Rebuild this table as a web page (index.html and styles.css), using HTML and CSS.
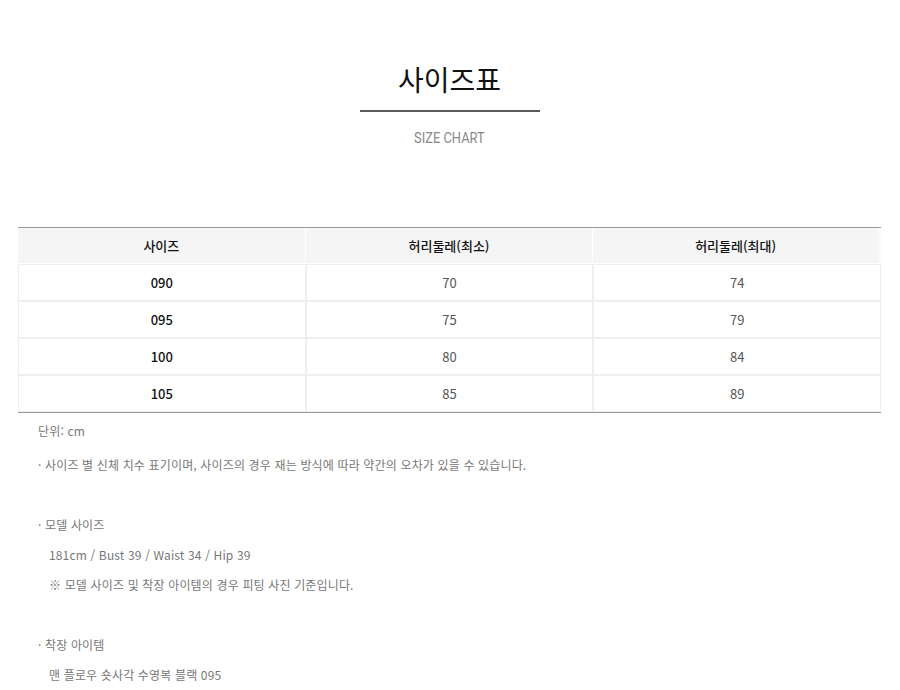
FILE: index.html
```html
<!DOCTYPE html>
<html lang="ko">
<head>
<meta charset="utf-8">
<title>사이즈표</title>
<link rel="stylesheet" href="styles.css">
</head>
<body>
<div class="page">
  <header class="head">
    <h1 class="title">사이즈표</h1>
    <div class="rule"></div>
    <p class="subtitle">SIZE CHART</p>
  </header>
  <table class="chart">
    <thead>
      <tr><th>사이즈</th><th>허리둘레(최소)</th><th>허리둘레(최대)</th></tr>
    </thead>
    <tbody>
      <tr><td class="size">090</td><td>70</td><td>74</td></tr>
      <tr><td class="size">095</td><td>75</td><td>79</td></tr>
      <tr><td class="size">100</td><td>80</td><td>84</td></tr>
      <tr><td class="size">105</td><td>85</td><td>89</td></tr>
    </tbody>
  </table>
  <div class="notes">
    <p class="unit">단위: cm</p>
    <p>· 사이즈 별 신체 치수 표기이며, 사이즈의 경우 재는 방식에 따라 약간의 오차가 있을 수 있습니다.</p>
    <p class="blank">&nbsp;</p>
    <p>· 모델 사이즈</p>
    <p class="sub">181cm / Bust 39 / Waist 34 / Hip 39</p>
    <p class="sub">※ 모델 사이즈 및 착장 아이템의 경우 피팅 사진 기준입니다.</p>
    <p class="blank">&nbsp;</p>
    <p>· 착장 아이템</p>
    <p class="sub">맨 플로우 숏사각 수영복 블랙 095</p>
  </div>
</div>
</body>
</html>
```
FILE: styles.css
```css
html, body {
  margin: 0;
  padding: 0;
  background: #fff;
}
body {
  font-family: "Noto Sans CJK KR", "Noto Sans", sans-serif;
  color: #333;
}
.page {
  padding: 0 19px 0 18px;
}
.head {
  display: flex;
  flex-direction: column;
  align-items: center;
  padding-top: 59px;
}
.title {
  margin: 0;
  font-size: 28px;
  line-height: 40px;
  font-weight: 400;
  color: #111;
}
.rule {
  width: 180px;
  height: 2px;
  background: #5a5a5a;
  margin-top: 11px;
}
.subtitle {
  margin: 16px 0 0;
  font-family: Roboto, "Noto Sans", sans-serif;
  font-size: 14px;
  line-height: 20px;
  color: #888;
  transform: scaleX(0.92);
}
.chart {
  width: 100%;
  margin-top: 79px;
  border-collapse: separate;
  border-spacing: 0;
  border-top: 1px solid #9a9a9a;
  border-bottom: 1px solid #9a9a9a;
  table-layout: fixed;
  font-size: 13px;
}
.chart th {
  background: #f5f5f5;
  height: 35px;
  padding: 0;
  font-weight: 500;
  color: #111;
  border-right: 1px solid #fff;
  border-bottom: 1px solid #fff;
}
.chart th:last-child {
  border-right: 3px solid #fafafa;
}
.chart td {
  height: 35px;
  padding: 0;
  text-align: center;
  border: 1px solid #eee;
  color: #555;
}
.chart td.size {
  font-weight: 500;
  color: #111;
}
.notes {
  padding-left: 20px;
  padding-top: 7px;
  font-size: 12px;
  letter-spacing: 0.15px;
  color: #777;
}
.notes p {
  margin: 0;
  line-height: 30px;
}
.notes .unit {
  line-height: 22px;
  margin-bottom: 8px;
}
.notes .sub {
  padding-left: 11px;
}
```
